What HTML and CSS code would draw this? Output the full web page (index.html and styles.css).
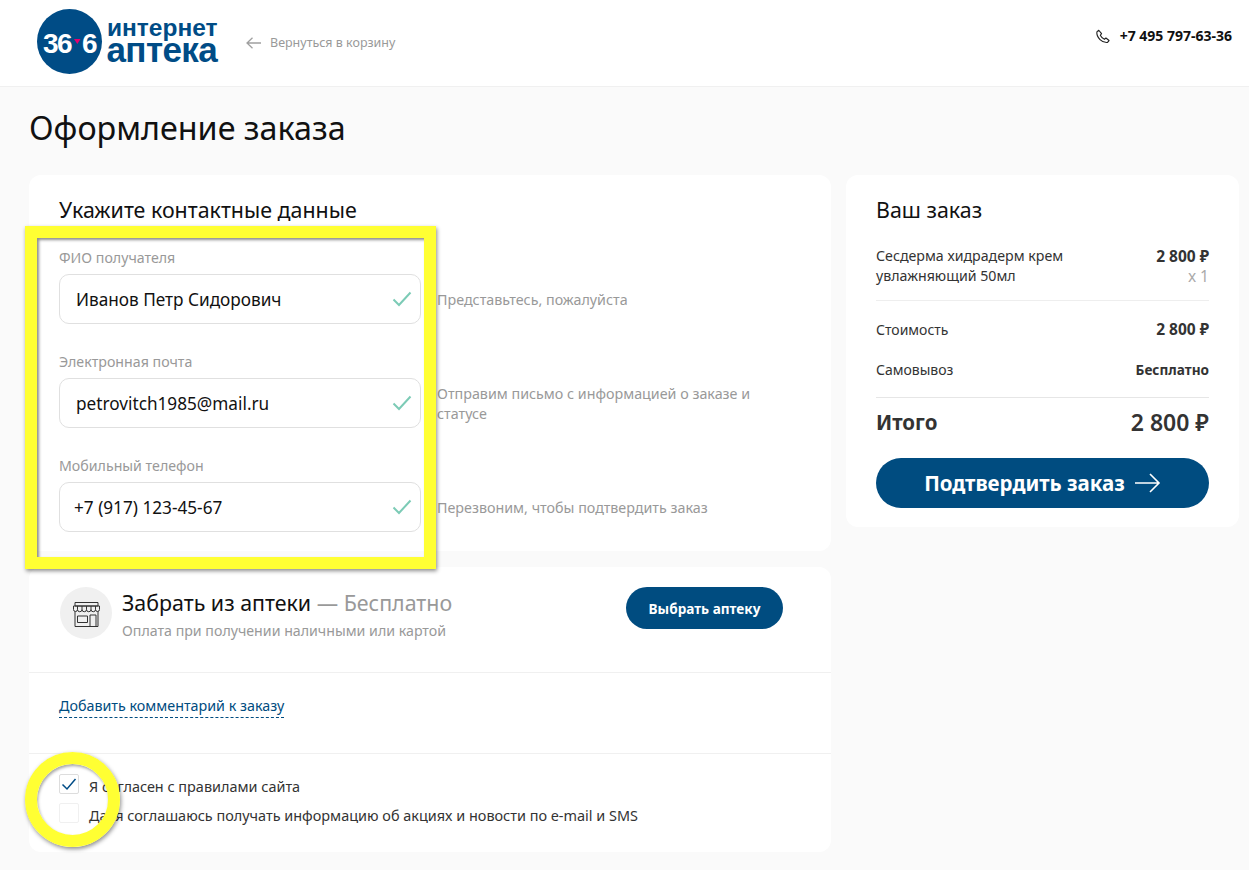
FILE: index.html
```html
<!DOCTYPE html>
<html lang="ru">
<head>
<meta charset="utf-8">
<title>Оформление заказа</title>
<link rel="stylesheet" href="styles.css">
</head>
<body>
<header class="topbar">
  <svg class="logo" width="186" height="66" viewBox="0 0 186 66">
    <circle cx="32.500" cy="32.500" r="32.500" fill="#004c86"/>
    <text class="logo-num" x="6" y="44">36</text>
    <text class="logo-num" x="45" y="44">6</text>
    <path d="M37 30h6.500l-3.200 5z" fill="#e6006e"/>
    <text class="logo-top" x="70" y="27">интернет</text>
    <text class="logo-bottom" x="69.500" y="53">аптека</text>
  </svg>
  <a class="back" href="#">
    <svg width="16" height="12" viewBox="0 0 16 12" fill="none" stroke="#a0a0a0" stroke-width="1.300"><path d="M15 6H1M6.500 .8 1 6l5.500 5.200"/></svg>
    Вернуться в корзину
  </a>
  <div class="phone">
    <svg width="15" height="15" viewBox="0 0 24 24" fill="none" stroke="#222" stroke-width="1.800" stroke-linejoin="round"><path d="M6 2 3 4.500C2.500 9 5 14 8 17s7 5 12 4.500l2.500-3-5-4-2.500 2c-2-.8-5.500-4.500-6.500-6.500L10.500 7.500z"/></svg>
    <span>+7 495 797-63-36</span>
  </div>
</header>

<main class="page">
  <h1 class="title">Оформление заказа</h1>
  <div class="columns">
    <div class="left">
      <section class="card contacts">
        <h2 class="heading">Укажите контактные данные</h2>
        <div class="field">
          <div class="label">ФИО получателя</div>
          <div class="row">
            <div class="input">Иванов Петр Сидорович<svg class="ok" width="20" height="16" viewBox="0 0 20 16" fill="none" stroke="#7ccbb6" stroke-width="2"><path d="M1.500 8.500 7 14 18.500 1.500"/></svg></div>
            <div class="hint">Представьтесь, пожалуйста</div>
          </div>
        </div>
        <div class="field">
          <div class="label">Электронная почта</div>
          <div class="row">
            <div class="input">petrovitch1985@mail.ru<svg class="ok" width="20" height="16" viewBox="0 0 20 16" fill="none" stroke="#7ccbb6" stroke-width="2"><path d="M1.500 8.500 7 14 18.500 1.500"/></svg></div>
            <div class="hint">Отправим письмо с информацией о заказе и статусе</div>
          </div>
        </div>
        <div class="field">
          <div class="label">Мобильный телефон</div>
          <div class="row">
            <div class="input input-phone">+7 (917) 123-45-67<svg class="ok" width="20" height="16" viewBox="0 0 20 16" fill="none" stroke="#7ccbb6" stroke-width="2"><path d="M1.500 8.500 7 14 18.500 1.500"/></svg></div>
            <div class="hint">Перезвоним, чтобы подтвердить заказ</div>
          </div>
        </div>
      </section>

      <section class="card delivery">
        <div class="pickup">
          <div class="pickup-icon">
            <svg width="27" height="25" viewBox="0 0 27 25" fill="none" stroke="#333" stroke-width="1"><path d="M2 .5h23v3.500H2zM.5 4h26v3.500a2 2 0 0 1-4 0 2 2 0 0 1-4.500 0 2 2 0 0 1-4.500 0 2 2 0 0 1-4.500 0 2 2 0 0 1-4.500 0 2 2 0 0 1-4 0zM4.500 4v3.500M9 4v3.500M13.500 4v3.500M18 4v3.500M22.500 4v3.500M2 9.500v15h23v-15M4.500 14h10v6.500h-10zM17 24.500V13h6v11.500"/></svg>
          </div>
          <div class="pickup-text">
            <div class="pickup-title">Забрать из аптеки <span class="muted">— Бесплатно</span></div>
            <div class="pickup-sub">Оплата при получении наличными или картой</div>
          </div>
          <a class="btn-small" href="#">Выбрать аптеку</a>
        </div>
        <div class="comment"><a class="dashed" href="#">Добавить комментарий к заказу</a></div>
        <div class="agreements">
          <div class="check-row">
            <span class="box"><svg width="18" height="14" viewBox="0 0 18 14" fill="none" stroke="#004c86" stroke-width="1.500"><path d="M2.500 7.500 7 12 15.500 2"/></svg></span>
            <span class="check-text">Я согласен с правилами сайта</span>
          </div>
          <div class="check-row">
            <span class="box box-off"></span>
            <span class="check-text">Да, я соглашаюсь получать информацию об акциях и новости по e-mail и SMS</span>
          </div>
        </div>
      </section>
    </div>

    <aside class="card summary">
      <h2 class="heading">Ваш заказ</h2>
      <div class="item">
        <div class="item-name">Сесдерма хидрадерм крем увлажняющий 50мл</div>
        <div class="item-price"><b>2 800 ₽</b><span class="qty">x 1</span></div>
      </div>
      <div class="line"><span>Стоимость</span><b class="amount">2 800 ₽</b></div>
      <div class="line line-last"><span>Самовывоз</span><b>Бесплатно</b></div>
      <div class="total"><span>Итого</span><span class="total-sum">2 800 ₽</span></div>
      <a class="btn-big" href="#">Подтвердить заказ
        <svg width="26" height="20" viewBox="0 0 26 20" fill="none" stroke="#fff" stroke-width="1.600"><path d="M0 10h24M15 1l9 9-9 9"/></svg>
      </a>
    </aside>
  </div>
</main>

<div class="mark-rect"></div>
<div class="mark-circle"></div>
</body>
</html>
```
FILE: styles.css
```css
* { box-sizing: border-box; }
html, body { margin: 0; padding: 0; }
body {
  position: relative;
  height: 870px;
  overflow: hidden;
  background: #fafafa;
  color: #333;
  font-family: "Noto Sans", "Liberation Sans", sans-serif;
}
a { color: inherit; text-decoration: none; }

.topbar {
  display: flex;
  align-items: flex-start;
  height: 87px;
  padding: 9px 17px 0 37px;
  background: #fff;
  border-bottom: 1px solid #f0f0f0;
}
.logo { flex: none; display: block; margin-right: -4px; }
.logo-num { font: 700 28px "Liberation Sans", sans-serif; letter-spacing: -1.500px; fill: #fff; }
.logo-top { font: 700 24.500px "Liberation Sans", sans-serif; fill: #004c86; }
.logo-bottom { font: 700 35px "Liberation Sans", sans-serif; letter-spacing: -.6px; fill: #004c86; }
.back {
  display: flex;
  align-items: center;
  gap: 8px;
  margin: 25px 0 0 27px;
  font-size: 12.500px;
  line-height: 18px;
  color: #999;
}
.phone {
  display: flex;
  align-items: center;
  gap: 10px;
  margin: 18px 0 0 auto;
  font-size: 14px;
  line-height: 18px;
  font-weight: 700;
  color: #111;
}

.page { padding: 0 10px 0 29px; }
.title {
  margin: 0;
  padding-top: 16px;
  height: 88px;
  font-size: 32.300px;
  line-height: 48px;
  font-weight: 400;
  color: #111;
}
.columns {
  display: grid;
  grid-template-columns: 802px 393px;
  column-gap: 15px;
  align-items: start;
}
.left { display: flex; flex-direction: column; gap: 16px; }
.card { background: #fff; border-radius: 12px; }
.heading {
  margin: 0;
  font-size: 21.400px;
  line-height: 28px;
  font-weight: 400;
  color: #111;
}

.contacts { height: 376px; padding: 21px 30px 0; }
.field { height: 104px; }
.contacts .heading { margin-bottom: 25px; }
.label { height: 25px; font-size: 14.200px; line-height: 18px; color: #999; }
.row { display: flex; align-items: center; gap: 16px; }
.input {
  position: relative;
  flex: none;
  width: 362px;
  height: 50px;
  padding-left: 16px;
  border: 1px solid #e0e0e0;
  border-radius: 10px;
  background: #fff;
  font-size: 17.200px;
  line-height: 49px;
  color: #111;
}
.input-phone { padding-left: 14px; }
.ok { position: absolute; right: 8px; top: 16px; }
.hint { width: 340px; margin-top: 1px; font-size: 14.300px; line-height: 20px; color: #999; }

.delivery { height: 285px; }
.pickup {
  display: flex;
  align-items: flex-start;
  height: 106px;
  padding: 20px 48px 0 31px;
  border-bottom: 1px solid #f0f0f0;
}
.pickup-icon {
  flex: none;
  display: flex;
  align-items: center;
  justify-content: center;
  width: 52px;
  height: 52px;
  padding-top: 2px;
  border-radius: 50%;
  background: #f0f0f0;
}
.pickup-text { margin-left: 10px; }
.pickup-title { font-size: 21.400px; line-height: 32px; color: #111; }
.muted { color: #999; }
.pickup-sub { margin-top: 2px; font-size: 14.200px; line-height: 20px; color: #999; }
.btn-small {
  display: block;
  margin-left: auto;
  width: 157px;
  height: 42px;
  border-radius: 21px;
  background: #004c80;
  color: #fff;
  text-align: center;
  font-size: 13.600px;
  line-height: 43px;
  font-weight: 700;
}
.comment { height: 81px; padding: 22px 30px 0; border-bottom: 1px solid #f0f0f0; font-size: 14.300px; line-height: 22px; }
.dashed { color: #004c80; border-bottom: 1px dashed #004c80; padding-bottom: 2px; }
.agreements { padding: 20px 30px 0; }
.check-row {
  display: flex;
  align-items: flex-start;
  gap: 10px;
  height: 20px;
  margin-bottom: 9px;
  font-size: 14.450px;
  line-height: 20px;
  color: #333;
}
.check-text { padding-top: 3px; }
.box {
  flex: none;
  display: flex;
  align-items: center;
  justify-content: center;
  width: 20px;
  height: 20px;
  border: 1px solid #ddd;
  border-radius: 2px;
}
.box-off { border-color: #f0f0f0; }

.summary { height: 352px; padding: 21px 30px 0; }
.summary .heading { margin-bottom: 22px; }
.item {
  display: flex;
  justify-content: space-between;
  height: 55px;
  border-bottom: 1px solid #eee;
  margin-bottom: 17px;
  font-size: 14.200px;
  line-height: 20px;
}
.item-name { width: 210px; }
.item-price { display: flex; flex-direction: column; align-items: flex-end; font-size: 15.500px; }
.qty { color: #aaa; }
.line {
  display: flex;
  justify-content: space-between;
  height: 40px;
  font-size: 14px;
  line-height: 24px;
}
.amount { font-size: 15.500px; line-height: 23px; }
.line-last { border-bottom: 1px solid #e6e6e6; }
.line-last b { font-size: 13.600px; }
.total {
  display: flex;
  justify-content: space-between;
  height: 60px;
  padding-top: 9px;
  font-size: 20.500px;
  line-height: 30px;
  font-weight: 700;
}
.total-sum { font-weight: 600; font-size: 23px; }
.btn-big {
  display: flex;
  align-items: center;
  justify-content: center;
  gap: 10px;
  height: 50px;
  border-radius: 25px;
  background: #004c80;
  color: #fff;
  font-size: 20.500px;
  font-weight: 700;
}

.mark-rect {
  position: absolute;
  left: 25px;
  top: 226px;
  width: 411px;
  height: 343px;
  border: 12px solid #ffff33;
  box-shadow: 1px 2px 4px rgba(0,0,0,.45), inset 2px 2px 3px rgba(0,0,0,.45);
}
.mark-circle {
  position: absolute;
  left: 25px;
  top: 752px;
  width: 95px;
  height: 95px;
  border: 12px solid #ffff33;
  border-radius: 50%;
  box-shadow: 1px 2px 4px rgba(0,0,0,.45), inset 1px 2px 3px rgba(0,0,0,.35);
}
```
